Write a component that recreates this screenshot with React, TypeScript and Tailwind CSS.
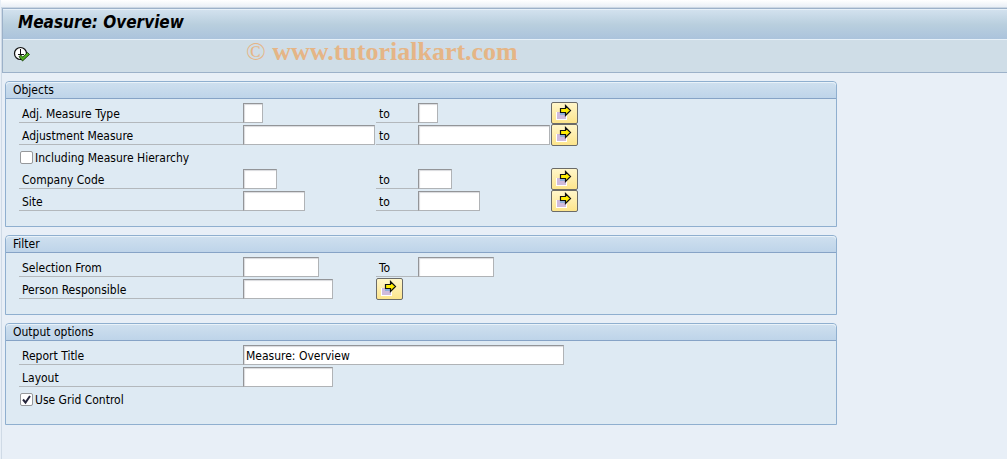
import { ReactNode, useState } from "react";

interface FieldProps {
    label: string;
    width: string;
    value?: string;
}

const ExecuteIcon = () => (
    <svg width="18" height="18" viewBox="0 0 18 18">
        <circle cx="7.5" cy="7.5" r="6" fill="#fff" stroke="#111" strokeWidth="1.2" />
        <path d="M7.5 3v5.5M5 8.5h6" stroke="#111" fill="none" shapeRendering="crispEdges" />
        <path
            d="M6 10.5L9.5 15L16.5 8.5L14.5 6.5L9.8 11L8 9.3Z"
            fill="#4fae1f"
            stroke="#173f0a"
            strokeWidth="0.9"
        />
    </svg>
);

const ArrowIcon = () => (
    <svg width="27" height="22" viewBox="0 0 27 22">
        <rect x="5" y="10" width="11" height="8" fill="#fff" />
        <rect x="6" y="10" width="9" height="7" fill="#d0bbdd" />
        <rect x="9" y="10" width="6" height="3" fill="#8fb0dc" />
        <path
            d="M9.5 6.5H14.5V3.5L19.5 8.5L14.5 13.5V10.5H9.5Z"
            fill="#ffed00"
            stroke="#111"
            strokeWidth="1.2"
        />
    </svg>
);

const MoreButton = ({ label }: { label: string }) => (
    <button
        type="button"
        aria-label={`Multiple selection for ${label}`}
        className="flex h-[22px] w-[27px] items-center justify-center overflow-hidden rounded-xs border border-[#6b6b68] bg-linear-to-b from-[#fff6c9] to-[#fde58b]"
    >
        <span className="shrink-0">
            <ArrowIcon />
        </span>
    </button>
);

const inputClass =
    "mt-px h-5 border border-[#b0b3b6] border-t-[#939598] border-l-[#939598] bg-white px-[2px] pt-[2px] text-xs shadow-[inset_1px_1px_1px_#d9dadd] outline-none";

const Field = ({ label, width, value = "" }: FieldProps) => (
    <input type="text" aria-label={label} defaultValue={value} className={`${inputClass} ${width}`} />
);

const Label = ({ children }: { children: ReactNode }) => (
    <span className="h-[21px] border-b border-[#b3b8bc] pl-[3px] leading-6">{children}</span>
);

const Row = ({ children }: { children: ReactNode }) => (
    <div className="grid h-[22px] grid-cols-[224px_133px_42px_133px_auto] justify-start">
        {children}
    </div>
);

const RangeRow = ({ label, width }: FieldProps) => (
    <Row>
        <Label>{label}</Label>
        <Field label={label} width={width} />
        <Label>to</Label>
        <Field label={`${label} to`} width={width} />
        <MoreButton label={label} />
    </Row>
);

const CheckRow = ({ label, initial }: { label: string; initial: boolean }) => {
    const [checked, setChecked] = useState(initial);

    return (
        <label className="flex h-[22px] items-center gap-[2px] pl-px leading-6">
            <span className="relative">
                <input
                    type="checkbox"
                    checked={checked}
                    onChange={(e) => setChecked(e.target.checked)}
                    className="block h-[13px] w-[13px] appearance-none rounded-xs border border-[#96989b] bg-white"
                />
                {checked && (
                    <svg className="pointer-events-none absolute inset-0" width="13" height="13" viewBox="0 0 13 13">
                        <path d="M3 6.5L5.5 9.5L10 3" fill="none" stroke="#26263c" strokeWidth="2" />
                    </svg>
                )}
            </span>
            <span className="pt-[2px]">{label}</span>
        </label>
    );
};

const Panel = ({ title, children }: { title: string; children: ReactNode }) => (
    <section className="rounded-t-sm border border-[#8fafcf] bg-[#deeaf3]">
        <h2 className="h-[17px] rounded-t-sm border-b border-[#86a3c6] bg-linear-to-b from-[#cfe0ef] to-[#bed4e9] pl-[7px] leading-4 shadow-[inset_0_1px_0_#e9f2f9]">
            {title}
        </h2>
        <div className="pt-[3px] pb-[14px] pl-[13px]">{children}</div>
    </section>
);

const App = () => {
    return (
        <div className="min-h-screen bg-[#e8eff7] pl-px font-['DejaVu_Sans_Condensed','DejaVu_Sans',sans-serif] text-xs text-black">
            <div className="h-2 border-b border-[#ccd7e3] bg-linear-to-b from-white to-[#e9eff6]" />
            <div className="min-h-[calc(100vh-8px)] border-l border-[#cfdae6]">
                <header className="border-y border-l border-[#9cb1c9] bg-[#cfdde7]">
                    <div className="flex h-[31px] items-start border-y border-[#e6f0f8] bg-linear-to-b from-[#d2e1ee] via-[#b9cfde] to-[#abc3dc] pl-[15px]">
                        <h1 className="text-[17px] leading-6 font-bold italic">Measure: Overview</h1>
                    </div>
                    <div className="flex h-8 items-start pl-[10px]">
                        <button type="button" aria-label="Execute" className="w-[233px] pt-[6px]">
                            <ExecuteIcon />
                        </button>
                        <p className="font-['Liberation_Serif',serif] text-[26px] leading-6 font-bold text-[#e5b586]">
                            <span className="font-normal">©</span> www.tutorialkart.com
                        </p>
                    </div>
                </header>

                <main className="flex max-w-[835px] flex-col gap-2 pt-2 pl-[3px]">
                    <Panel title="Objects">
                        <RangeRow label="Adj. Measure Type" width="w-5" />
                        <RangeRow label="Adjustment Measure" width="w-[132px]" />
                        <CheckRow label="Including Measure Hierarchy" initial={false} />
                        <RangeRow label="Company Code" width="w-[34px]" />
                        <RangeRow label="Site" width="w-[62px]" />
                    </Panel>

                    <Panel title="Filter">
                        <Row>
                            <Label>Selection From</Label>
                            <Field label="Selection From" width="w-[76px]" />
                            <Label>To</Label>
                            <Field label="Selection To" width="w-[76px]" />
                        </Row>
                        <Row>
                            <Label>Person Responsible</Label>
                            <Field label="Person Responsible" width="w-[90px]" />
                            <MoreButton label="Person Responsible" />
                        </Row>
                    </Panel>

                    <Panel title="Output options">
                        <div className="flex h-[22px]">
                            <div className="grid w-56">
                                <Label>Report Title</Label>
                            </div>
                            <Field label="Report Title" width="w-[321px]" value="Measure: Overview" />
                        </div>
                        <Row>
                            <Label>Layout</Label>
                            <Field label="Layout" width="w-[90px]" />
                        </Row>
                        <CheckRow label="Use Grid Control" initial={true} />
                    </Panel>
                </main>
            </div>
        </div>
    );
};

export default App;
